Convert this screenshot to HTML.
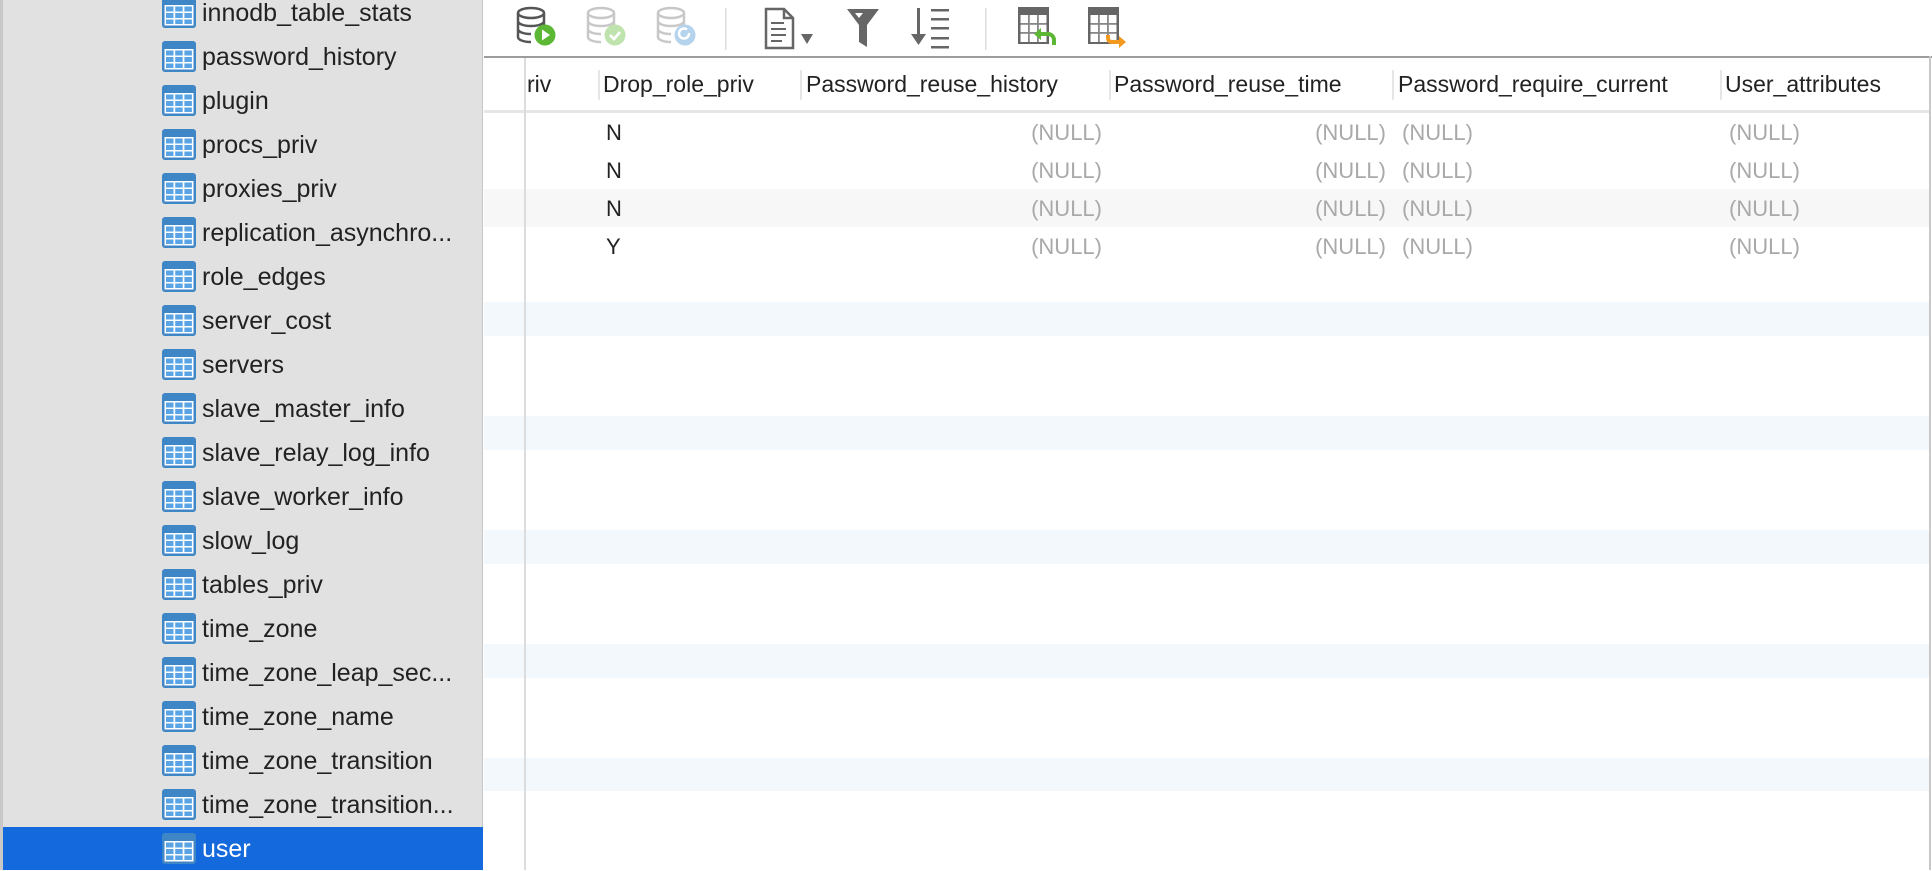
<!DOCTYPE html>
<html><head><meta charset="utf-8"><style>
*{margin:0;padding:0;box-sizing:border-box}
body{width:1932px;height:870px;position:relative;overflow:hidden;background:#fff;font-family:"Liberation Sans",sans-serif;color:#222}
.abs{position:absolute}
#side{left:0;top:0;width:483px;height:870px;background:#e1e1e1;border-left:3px solid #c8c8c8;border-right:1px solid #c6c6c6}
.row{position:absolute;left:0;width:480px;height:44px;font-size:25px;line-height:44px}
.row svg{position:absolute;left:159px;top:6px}
.row span{position:absolute;left:199px;top:0}
.sel{background:#1469dc;color:#fff}
.hd{position:absolute;top:57px;height:54px;line-height:54px;font-size:23px;color:#222}
.hs{position:absolute;top:70px;width:2px;height:30px;background:#e6e6e6}
.c{position:absolute;font-size:22px;height:38px;line-height:38px}
.nl{color:#a9a9a9}
.r{width:200px;text-align:right}
</style></head><body>
<div id="side" class="abs">
<svg width="0" height="0" style="position:absolute"><defs>
<g id="ti"><rect x="0" y="0" width="34" height="31" rx="3" fill="#3f86c6"/><rect x="2.5" y="8" width="29" height="20.5" fill="#fff"/>
<g fill="#5aa4e6"><rect x="4" y="9.5" width="7.5" height="5"/><rect x="13.2" y="9.5" width="7.5" height="5"/><rect x="22.4" y="9.5" width="7.5" height="5"/>
<rect x="4" y="16" width="7.5" height="5"/><rect x="13.2" y="16" width="7.5" height="5"/><rect x="22.4" y="16" width="7.5" height="5"/>
<rect x="4" y="22.5" width="7.5" height="4.5"/><rect x="13.2" y="22.5" width="7.5" height="4.5"/><rect x="22.4" y="22.5" width="7.5" height="4.5"/></g></g>
</defs></svg>
<div class="row" style="top:-9px"><svg width="34" height="31"><use href="#ti"/></svg><span>innodb_table_stats</span></div>
<div class="row" style="top:35px"><svg width="34" height="31"><use href="#ti"/></svg><span>password_history</span></div>
<div class="row" style="top:79px"><svg width="34" height="31"><use href="#ti"/></svg><span>plugin</span></div>
<div class="row" style="top:123px"><svg width="34" height="31"><use href="#ti"/></svg><span>procs_priv</span></div>
<div class="row" style="top:167px"><svg width="34" height="31"><use href="#ti"/></svg><span>proxies_priv</span></div>
<div class="row" style="top:211px"><svg width="34" height="31"><use href="#ti"/></svg><span>replication_asynchro...</span></div>
<div class="row" style="top:255px"><svg width="34" height="31"><use href="#ti"/></svg><span>role_edges</span></div>
<div class="row" style="top:299px"><svg width="34" height="31"><use href="#ti"/></svg><span>server_cost</span></div>
<div class="row" style="top:343px"><svg width="34" height="31"><use href="#ti"/></svg><span>servers</span></div>
<div class="row" style="top:387px"><svg width="34" height="31"><use href="#ti"/></svg><span>slave_master_info</span></div>
<div class="row" style="top:431px"><svg width="34" height="31"><use href="#ti"/></svg><span>slave_relay_log_info</span></div>
<div class="row" style="top:475px"><svg width="34" height="31"><use href="#ti"/></svg><span>slave_worker_info</span></div>
<div class="row" style="top:519px"><svg width="34" height="31"><use href="#ti"/></svg><span>slow_log</span></div>
<div class="row" style="top:563px"><svg width="34" height="31"><use href="#ti"/></svg><span>tables_priv</span></div>
<div class="row" style="top:607px"><svg width="34" height="31"><use href="#ti"/></svg><span>time_zone</span></div>
<div class="row" style="top:651px"><svg width="34" height="31"><use href="#ti"/></svg><span>time_zone_leap_sec...</span></div>
<div class="row" style="top:695px"><svg width="34" height="31"><use href="#ti"/></svg><span>time_zone_name</span></div>
<div class="row" style="top:739px"><svg width="34" height="31"><use href="#ti"/></svg><span>time_zone_transition</span></div>
<div class="row" style="top:783px"><svg width="34" height="31"><use href="#ti"/></svg><span>time_zone_transition...</span></div>
<div class="row sel" style="top:827px;height:43px"><svg width="34" height="31"><use href="#ti"/></svg><span>user</span></div>
</div>

<svg class="abs" style="left:484px;top:0" width="1448" height="58">
<defs>
<g id="db" fill="none" stroke-width="2.5"><ellipse cx="16" cy="9" rx="13" ry="5"/><path d="M3 9v24c0 3 6 5 13 5M29 9v12M3 17c0 3 6 5 13 5s13-2 13-5M3 25c0 3 6 5 13 5"/></g>
</defs>
<g transform="translate(31,4)"><use href="#db" stroke="#555"/><circle cx="30" cy="31" r="10.5" fill="#5cb734"/><path d="M27 25.5l8 5.5-8 5.5z" fill="#fff"/></g>
<g transform="translate(101,4)"><use href="#db" stroke="#c8c8c8"/><circle cx="30" cy="31" r="10.5" fill="#bfe3ad"/><path d="M25 31l4 4 6-7" stroke="#fff" stroke-width="2.8" fill="none"/></g>
<g transform="translate(171,4)"><use href="#db" stroke="#c8c8c8"/><circle cx="30" cy="31" r="10.5" fill="#b5d3ec"/><path d="M34 29a5 5 0 1 1-2-3.5" stroke="#fff" stroke-width="2.5" fill="none"/></g>
<rect x="241" y="8" width="1.5" height="42" fill="#ddd"/>
<g transform="translate(280,7)" fill="none" stroke="#666" stroke-width="2.5"><path d="M2 2h18l9 9v30H2z"/><path d="M20 2v9h9"/><path d="M7 16h13M7 22h15M7 28h15M7 34h11" stroke-width="2"/></g>
<path d="M317 34h12l-6 10z" fill="#666"/>
<path d="M363 9h32l-12 16v22l-8-5V25z" fill="#666"/><path d="M371 13h8l-4 5z" fill="#fff"/>
<g fill="#666"><rect x="433" y="8" width="3" height="30"/><path d="M427 34h15l-7.5 11z"/><rect x="447" y="9" width="18" height="2.5"/><rect x="447" y="18" width="18" height="2.5"/><rect x="447" y="27" width="18" height="2.5"/><rect x="447" y="37" width="18" height="2.5"/><rect x="447" y="46" width="18" height="2.5"/></g>
<rect x="501" y="8" width="1.5" height="42" fill="#ddd"/>
<g transform="translate(534,7)"><rect x="0" y="0" width="31" height="37" fill="#666"/><rect x="2.5" y="8" width="26" height="27" fill="#fff"/><g fill="#888"><rect x="10" y="8" width="1.8" height="27"/><rect x="19" y="8" width="1.8" height="27"/><rect x="2.5" y="16" width="26" height="1.8"/><rect x="2.5" y="25" width="26" height="1.8"/></g>
<path d="M36 38v-5a6 6 0 0 0-6-6h-8" stroke="#5cb734" stroke-width="4" fill="none"/><path d="M16 27l7-6v12z" fill="#5cb734"/></g>
<g transform="translate(604,7)"><rect x="0" y="0" width="31" height="37" fill="#666"/><rect x="2.5" y="8" width="26" height="27" fill="#fff"/><g fill="#888"><rect x="10" y="8" width="1.8" height="27"/><rect x="19" y="8" width="1.8" height="27"/><rect x="2.5" y="16" width="26" height="1.8"/><rect x="2.5" y="25" width="26" height="1.8"/></g>
<path d="M20 28v3a4 4 0 0 0 4 4h8" stroke="#f39a1e" stroke-width="4" fill="none"/><path d="M38 35l-7-6v12z" fill="#f39a1e"/></g>
</svg>
<div class="abs" style="left:484px;top:56px;width:1448px;height:2px;background:#9c9c9c"></div>
<div class="abs" style="left:1929px;top:56px;width:2px;height:814px;background:#c8c8c8"></div>

<div class="abs" style="left:484px;top:189px;width:1445px;height:38px;background:#f7f7f7"></div>
<div class="abs" style="left:484px;top:302px;width:1445px;height:34px;background:#f3f8fd"></div>
<div class="abs" style="left:484px;top:416px;width:1445px;height:34px;background:#f3f8fd"></div>
<div class="abs" style="left:484px;top:530px;width:1445px;height:34px;background:#f3f8fd"></div>
<div class="abs" style="left:484px;top:644px;width:1445px;height:34px;background:#f3f8fd"></div>
<div class="abs" style="left:484px;top:758px;width:1445px;height:33px;background:#f3f8fd"></div>

<div class="abs" style="left:484px;top:110px;width:1445px;height:3px;background:#e6e6e6"></div>
<div class="abs" style="left:524px;top:58px;width:2px;height:812px;background:#dcdcdc"></div>

<div class="hd" style="left:527px">riv</div>
<div class="hs" style="left:598px"></div><div class="hd" style="left:603px">Drop_role_priv</div>
<div class="hs" style="left:800px"></div><div class="hd" style="left:806px">Password_reuse_history</div>
<div class="hs" style="left:1109px"></div><div class="hd" style="left:1114px">Password_reuse_time</div>
<div class="hs" style="left:1392px"></div><div class="hd" style="left:1398px">Password_require_current</div>
<div class="hs" style="left:1720px"></div><div class="hd" style="left:1725px">User_attributes</div>

<div class="c" style="left:606px;top:114px">N</div>
<div class="c" style="left:606px;top:152px">N</div>
<div class="c" style="left:606px;top:190px">N</div>
<div class="c" style="left:606px;top:228px">Y</div>
<div class="c nl r" style="left:902px;top:114px">(NULL)</div><div class="c nl r" style="left:1186px;top:114px">(NULL)</div><div class="c nl" style="left:1402px;top:114px">(NULL)</div><div class="c nl" style="left:1729px;top:114px">(NULL)</div>
<div class="c nl r" style="left:902px;top:152px">(NULL)</div><div class="c nl r" style="left:1186px;top:152px">(NULL)</div><div class="c nl" style="left:1402px;top:152px">(NULL)</div><div class="c nl" style="left:1729px;top:152px">(NULL)</div>
<div class="c nl r" style="left:902px;top:190px">(NULL)</div><div class="c nl r" style="left:1186px;top:190px">(NULL)</div><div class="c nl" style="left:1402px;top:190px">(NULL)</div><div class="c nl" style="left:1729px;top:190px">(NULL)</div>
<div class="c nl r" style="left:902px;top:228px">(NULL)</div><div class="c nl r" style="left:1186px;top:228px">(NULL)</div><div class="c nl" style="left:1402px;top:228px">(NULL)</div><div class="c nl" style="left:1729px;top:228px">(NULL)</div>
</body></html>
